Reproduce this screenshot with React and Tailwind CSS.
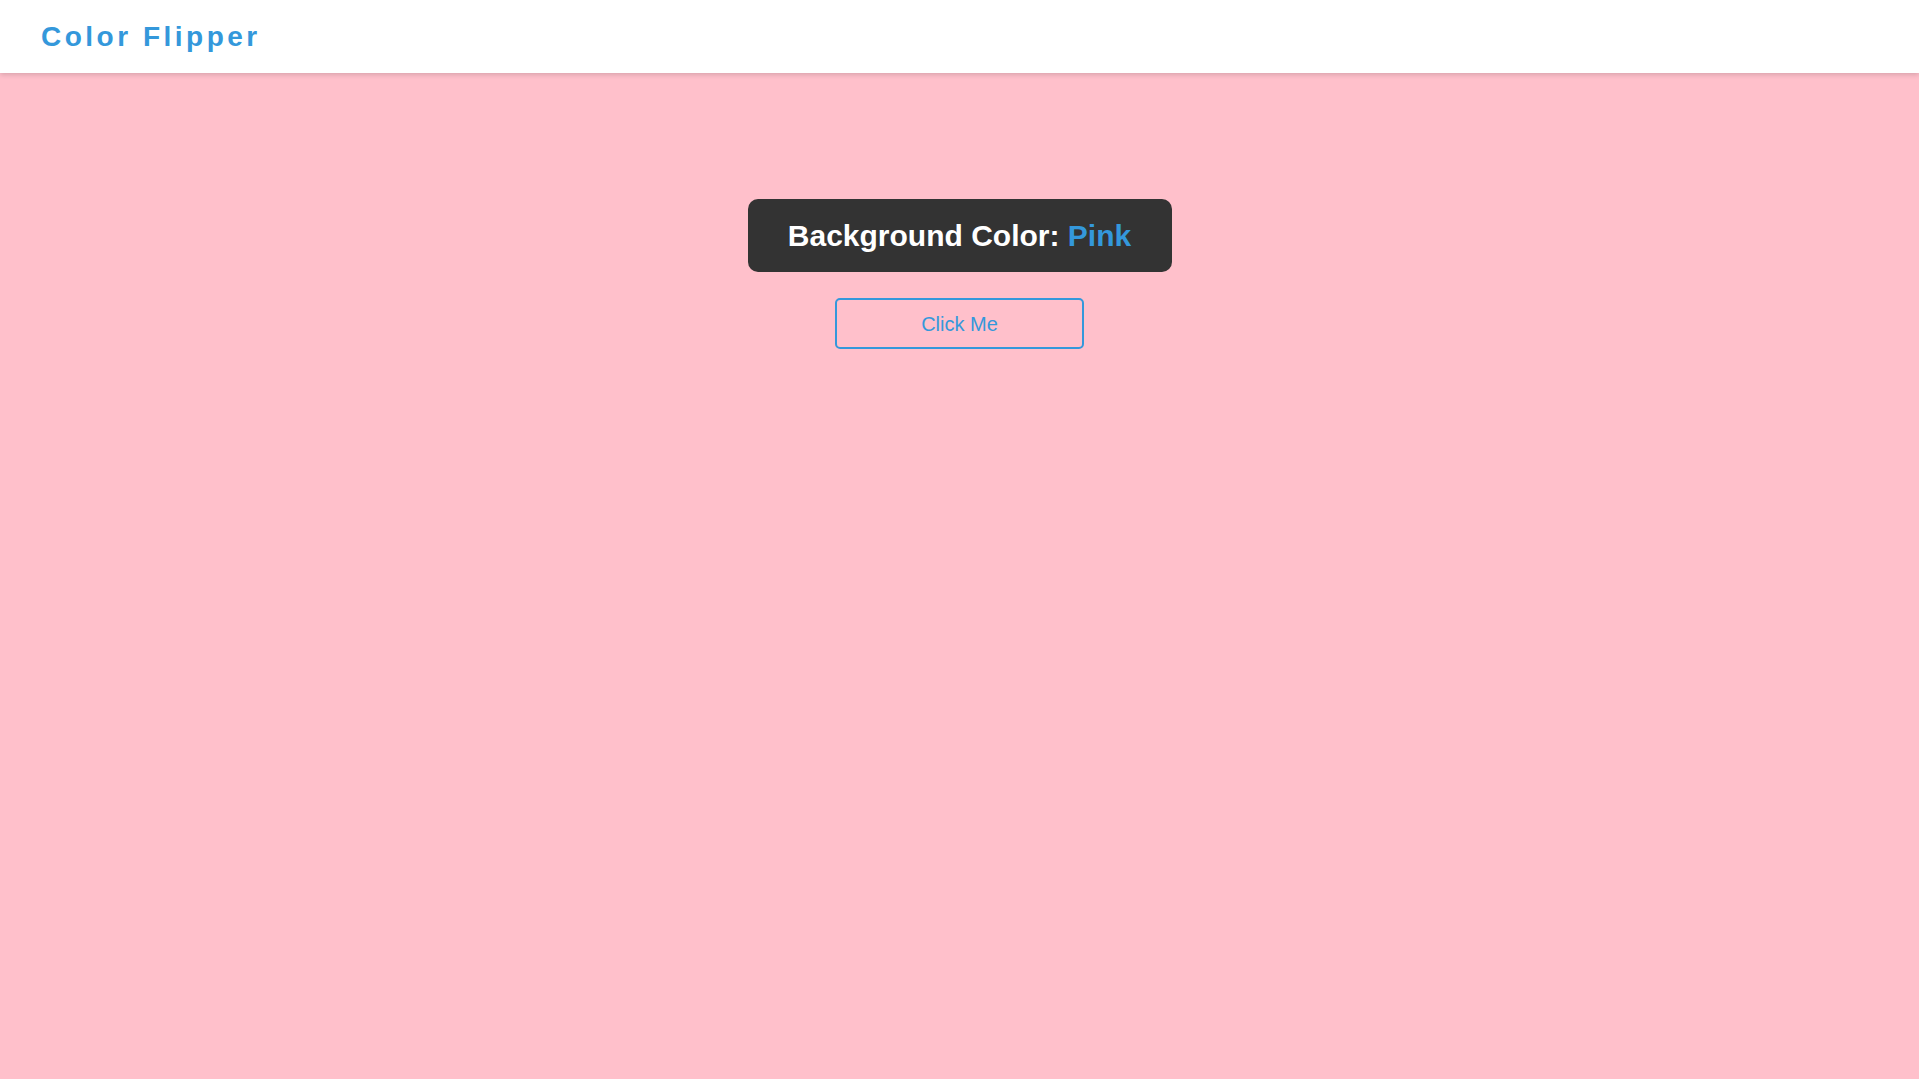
import React from "react";

export default function App() {
  return (
    <div className="min-h-screen w-full bg-[#ffc0cb] flex flex-col" style={{ fontFamily: '"Liberation Sans", Arial, sans-serif' }}>
      <header className="h-[73px] bg-white flex items-center pl-[41px] shadow-[0_2px_5px_rgba(0,0,0,0.15)]">
        <h1 className="text-[28px] font-bold tracking-[3.5px] text-[#3498db] leading-none">Color Flipper</h1>
      </header>
      <main className="flex flex-col items-center pt-[126px]">
        <div className="w-[424px] h-[73px] bg-[#333333] rounded-[10px] flex items-center justify-center">
          <h2 className="text-[30px] font-bold text-white leading-none">
            Background Color: <span className="text-[#3498db]">Pink</span>
          </h2>
        </div>
        <button className="mt-[26px] w-[249px] h-[51px] border-2 border-[#3498db] rounded-[5px] bg-transparent text-[#3498db] text-[20px] flex items-center justify-center">
          Click Me
        </button>
      </main>
    </div>
  );
}
